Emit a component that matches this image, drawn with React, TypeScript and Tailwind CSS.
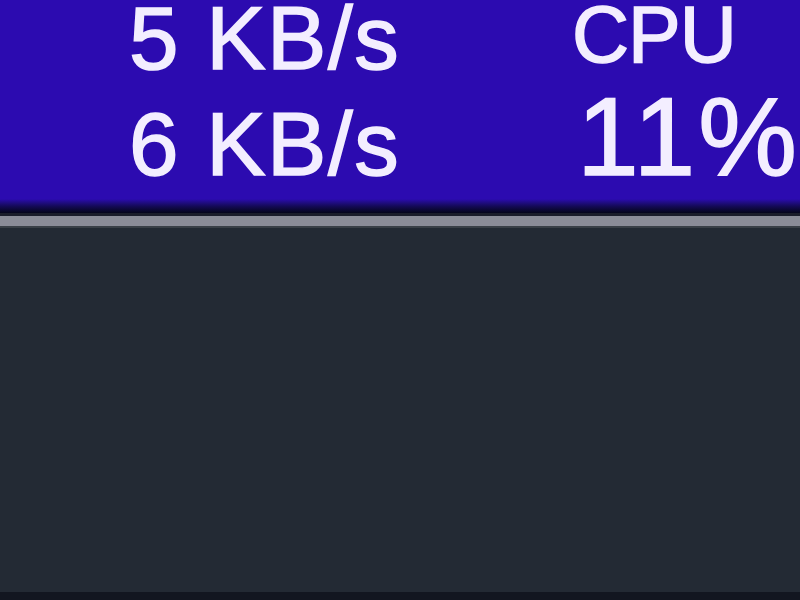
import React from "react";

export default function App() {
  const font = { fontFamily: '"Liberation Sans", Arial, sans-serif' };
  return (
    <div className="w-[800px] h-[600px] overflow-hidden flex flex-col bg-[#232a34]" style={font}>
      <div className="h-[213px] relative bg-[#2c0bb0] overflow-hidden flex">
        <div className="w-[572px] pl-[129px] text-[#f3eeff] [-webkit-text-stroke:1.5px_#f3eeff] whitespace-nowrap">
          <div className="text-[89px] leading-[89px] mt-[-6px] tracking-[1.5px]">5 KB/s</div>
          <div className="text-[89px] leading-[89px] mt-[17px] tracking-[1.5px]">6 KB/s</div>
        </div>
        <div className="flex-1 text-[#f3eeff] [-webkit-text-stroke:1.5px_#f3eeff] whitespace-nowrap">
          <div className="text-[79px] leading-[80px] mt-[-5px] pl-[1px] tracking-[-1px]">CPU</div>
          <div className="text-[111px] leading-[112px] mt-[6px] pl-[6px] tracking-[3px]">11%</div>
        </div>
        <div className="absolute left-0 right-0 bottom-0 h-[14px] bg-gradient-to-b from-[#2c0bb0] via-[#150a5a] to-[#05041a]" />
      </div>
      <div className="h-[3px] bg-[#1a1c2a]" />
      <div className="h-[10px] bg-[#8b8c98]" />
      <div className="h-[2px] bg-[#3a4048]" />
      <div className="flex-1 bg-[#232a34]" />
      <div className="h-[8px] bg-[#121620]" />
    </div>
  );
}
